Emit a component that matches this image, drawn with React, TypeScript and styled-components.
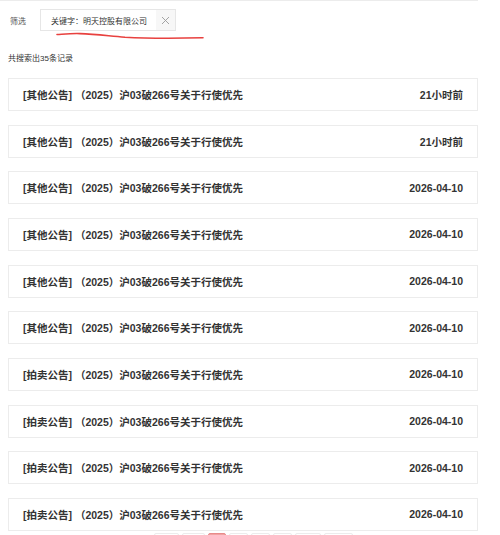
import styled, { createGlobalStyle } from 'styled-components';

const GlobalStyle = createGlobalStyle`
  html, body {
    margin: 0;
    padding: 0;
    background: #fff;
    font-family: "Liberation Sans", "Noto Sans CJK SC", sans-serif;
    color: #333;
  }
`;

const Page = styled.div`
  width: 478px;
  border-top: 1.5px solid #ececec;
  position: relative;
`;

const FilterBar = styled.div`
  display: flex;
  align-items: center;
  gap: 14px;
  padding: 8px 0 0 10px;
  height: 22px;
`;

const FilterLabel = styled.span`
  font-size: 8px;
  color: #555;
`;

const Tag = styled.div`
  display: flex;
  align-items: stretch;
  height: 20px;
  border: 1px solid #e6e6e6;
  background: #fff;
`;

const TagText = styled.span`
  display: flex;
  align-items: center;
  padding: 0 9px 0 10px;
  font-size: 8px;
  color: #333;
`;

const TagClose = styled.span`
  width: 19px;
  display: flex;
  align-items: center;
  justify-content: center;
  background: #f7f7f7;
  color: #999;
`;

const Scribble = styled.svg`
  position: absolute;
  left: 0;
  top: 0;
  pointer-events: none;
`;

const Summary = styled.div`
  font-size: 8px;
  color: #333;
  padding: 22px 0 0 8px;
  height: 20px;
  line-height: 12px;
`;

const List = styled.div`
  display: flex;
  flex-direction: column;
  gap: 13.67px;
  padding: 5px 0 0 8px;
`;

const Card = styled.div`
  height: 31px;
  border: 1px solid #ececec;
  background: #fff;
  display: flex;
  align-items: center;
  justify-content: space-between;
  padding: 0 14px;
  font-size: 10.5px;
  font-weight: 700;
  color: #333;
`;

const Title = styled.span`
  white-space: nowrap;
`;

const Time = styled.span`
  white-space: nowrap;
`;

const Pager = styled.div`
  display: flex;
  gap: 3px;
  padding: 2px 0 0 154px;
`;

const PageBtn = styled.span<{ $w: number; $active?: boolean }>`
  width: ${({ $w }) => $w}px;
  height: 16px;
  border: 1px solid ${({ $active }) => ($active ? '#e98a8a' : '#ececec')};
  background: ${({ $active }) => ($active ? '#f0a3a3' : '#fff')};
  border-radius: 2px;
`;

const items = [
  ['其他公告', '21小时前'],
  ['其他公告', '21小时前'],
  ['其他公告', '2026-04-10'],
  ['其他公告', '2026-04-10'],
  ['其他公告', '2026-04-10'],
  ['其他公告', '2026-04-10'],
  ['拍卖公告', '2026-04-10'],
  ['拍卖公告', '2026-04-10'],
  ['拍卖公告', '2026-04-10'],
  ['拍卖公告', '2026-04-10'],
];

const pages = [
  { w: 23 },
  { w: 21 },
  { w: 16, active: true },
  { w: 17 },
  { w: 17 },
  { w: 17 },
  { w: 24 },
  { w: 27 },
];

export default function App() {
  return (
    <>
      <GlobalStyle />
      <Page>
        <FilterBar>
          <FilterLabel>筛选</FilterLabel>
          <Tag>
            <TagText>关键字：明天控股有限公司</TagText>
            <TagClose>
              <svg width="9" height="9" viewBox="0 0 9 9">
                <path d="M1 1L8 8M8 1L1 8" stroke="#9a9a9a" strokeWidth="0.9" />
              </svg>
            </TagClose>
          </Tag>
        </FilterBar>
        <Scribble width="220" height="45" viewBox="0 0 220 45">
          <path
            d="M57 33.5 C 65 33, 72 32.3, 80 32.6 C 95 33.2, 105 34.5, 125 36.2 C 150 37.6, 175 37.4, 203 36.8"
            fill="none"
            stroke="#e8413f"
            strokeWidth="1.6"
            strokeLinecap="round"
          />
        </Scribble>
        <Summary>共搜索出35条记录</Summary>
        <List>
          {items.map(([kind, time], i) => (
            <Card key={i}>
              <Title>[{kind}] （2025）沪03破266号关于行使优先</Title>
              <Time>{time}</Time>
            </Card>
          ))}
        </List>
        <Pager>
          {pages.map((p, i) => (
            <PageBtn key={i} $w={p.w} $active={p.active} />
          ))}
        </Pager>
      </Page>
    </>
  );
}
